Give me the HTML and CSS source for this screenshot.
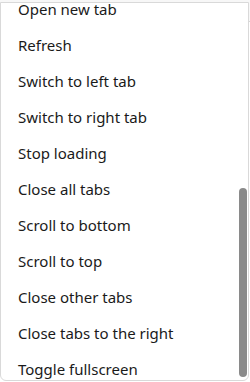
FILE: index.html
```html
<!DOCTYPE html>
<html lang="en">
<head>
<meta charset="utf-8">
<link rel="stylesheet" href="styles.css">
</head>
<body>
  <div class="backdrop"></div>
  <div class="menu">
    <ul class="menu-list">
      <li class="menu-item">Open new tab</li>
      <li class="menu-item">Refresh</li>
      <li class="menu-item">Switch to left tab</li>
      <li class="menu-item">Switch to right tab</li>
      <li class="menu-item">Stop loading</li>
      <li class="menu-item">Close all tabs</li>
      <li class="menu-item">Scroll to bottom</li>
      <li class="menu-item">Scroll to top</li>
      <li class="menu-item">Close other tabs</li>
      <li class="menu-item">Close tabs to the right</li>
      <li class="menu-item">Toggle fullscreen</li>
    </ul>
    <div class="scroll-thumb"></div>
  </div>
</body>
</html>
```

FILE: styles.css
```css
html, body {
  margin: 0;
  padding: 0;
  background: #ffffff;
}
body {
  width: 250px;
  height: 382px;
  position: relative;
  overflow: hidden;
  font-family: "Noto Sans", "Open Sans", sans-serif;
}
.backdrop {
  position: absolute;
  left: 0;
  right: 0;
  top: 0;
  height: 21px;
  border-bottom: 1px solid #d6d6d6;
  background: #f7f7f7;
}
.menu {
  position: absolute;
  left: 0;
  top: 2px;
  width: 249px;
  height: 379px;
  box-sizing: border-box;
  border: 1px solid #d9d9d9;
  border-radius: 0 0 6px 6px;
  background: #ffffff;
  overflow: hidden;
  display: flex;
  flex-direction: column;
  justify-content: flex-end;
}
.menu-list {
  list-style: none;
  margin: 0 0 -7px 0;
  padding: 0;
}
.menu-item {
  height: 36px;
  display: flex;
  align-items: center;
  padding-left: 17px;
  font-size: 15px;
  color: #1a1a1a;
  white-space: nowrap;
}
.scroll-thumb {
  position: absolute;
  right: 1px;
  top: 185px;
  bottom: 3px;
  width: 8px;
  border-radius: 4px;
  background: #8a8a8a;
}
```
